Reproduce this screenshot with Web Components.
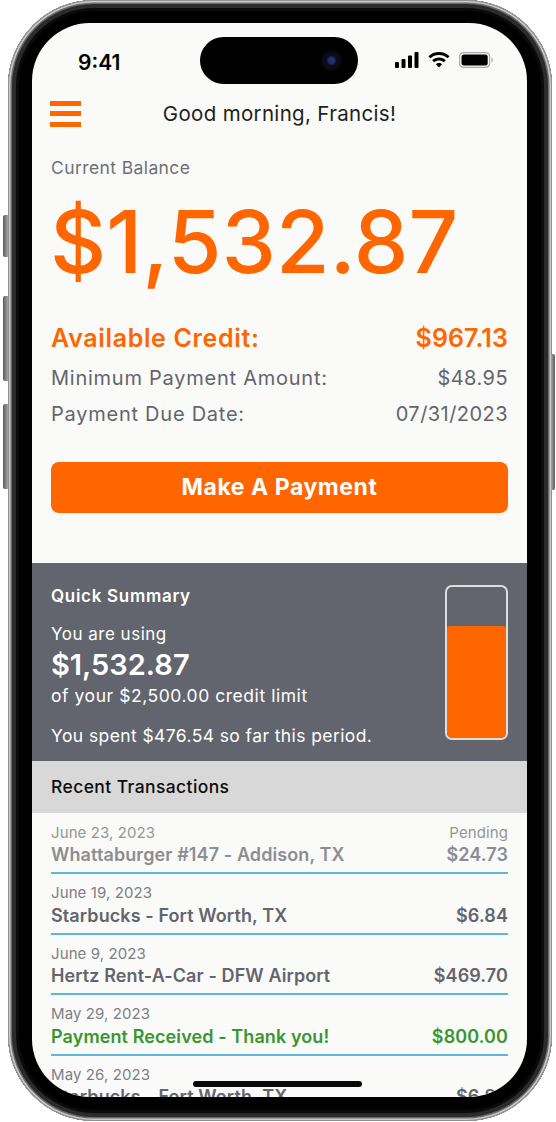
<!DOCTYPE html>
<html>
<head>
<meta charset="utf-8">
<title>Card balance</title>
<style>
html, body { margin: 0; background: #fff; }
body { font-family: Inter, "Liberation Sans", sans-serif; width: 556px; height: 1122px; overflow: hidden; }
</style>
</head>
<body>
<phone-frame>
  <status-bar></status-bar>
  <top-nav greeting="Good morning, Francis!"></top-nav>
  <balance-panel></balance-panel>
  <quick-summary></quick-summary>
  <section-head>Recent Transactions</section-head>
  <txn-row date="June 23, 2023" name="Whattaburger #147 - Addison, TX" amount="$24.73" note="Pending" kind="pending"></txn-row>
  <txn-row date="June 19, 2023" name="Starbucks - Fort Worth, TX" amount="$6.84"></txn-row>
  <txn-row date="June 9, 2023" name="Hertz Rent-A-Car - DFW Airport" amount="$469.70"></txn-row>
  <txn-row date="May 29, 2023" name="Payment Received - Thank you!" amount="$800.00" kind="credit"></txn-row>
  <txn-row date="May 26, 2023" name="Starbucks - Fort Worth, TX" amount="$6.84"></txn-row>
</phone-frame>

<script>
class PhoneFrame extends HTMLElement {
    constructor() {
        super();
        this.attachShadow({ mode: 'open' }).innerHTML = `
<style>
:host { display: block; position: relative; width: 544px; height: 1121px; margin-left: 8px; box-sizing: border-box;
    padding: 23px 24px; background: #000; border-radius: 86px;
    box-shadow: inset 0 0 0 1px #8f9190, inset 0 0 0 2.5px #c9cbca, inset 0 0 0 4px #6a6a6a, inset 0 0 0 8px #2b2b2b, inset 0 0 0 11px #0a0a0a; }
.screen { height: 1074px; width: 495px; background: #fafaf8; border-radius: 58px; overflow: hidden; position: relative; display: flex; flex-direction: column; }
.island { position: absolute; left: 168px; top: 14px; width: 158px; height: 47px; border-radius: 24px; background: #000; }
.lens { position: absolute; right: 16px; top: 13px; width: 21px; height: 21px; border-radius: 50%;
    background: radial-gradient(circle, #23306e 0 3px, #0b0d1c 5px, #07070c 10px); }
.home { position: absolute; left: 161px; bottom: 10px; width: 169px; height: 6px; border-radius: 3px; background: #07090b; }
.btn { position: absolute; left: -5px; width: 5px; background: linear-gradient(90deg, #5a5a5a, #a4a6a6); border-radius: 2px 0 0 2px; }
.btn.a { top: 215px; height: 42px; }
.btn.b { top: 296px; height: 85px; }
.btn.c { top: 404px; height: 85px; }
.btn.d { left: auto; right: -3px; top: 354px; height: 136px; border-radius: 0 2px 2px 0; width: 4px; background: linear-gradient(90deg, #a4a6a6, #5a5a5a); }
</style>
<span class="btn a"></span><span class="btn b"></span><span class="btn c"></span><span class="btn d"></span>
<div class="screen">
  <slot></slot>
  <div class="island"><div class="lens"></div></div>
  <div class="home"></div>
</div>`;
    }
}

class StatusBar extends HTMLElement {
    constructor() {
        super();
        this.attachShadow({ mode: 'open' }).innerHTML = `
<style>
:host { display: flex; flex: none; height: 65px; box-sizing: border-box; padding: 27px 34px 0 46px; justify-content: space-between; align-items: flex-start; }
.time { font: 600 21px/26px Inter, sans-serif; color: #000; }
.icons { display: flex; gap: 9px; align-items: center; margin-top: 2px; }
svg { display: block; }
</style>
<div class="time">9:41</div>
<div class="icons">
  <svg width="24" height="16" viewBox="0 0 24 16"><rect x="0" y="10" width="4" height="6" rx="1"/><rect x="6.5" y="7" width="4" height="9" rx="1"/><rect x="13" y="3.5" width="4" height="12.5" rx="1"/><rect x="19.5" y="0" width="4" height="16" rx="1"/></svg>
  <svg width="22" height="16" viewBox="0 0 22 16"><path d="M11 0C6.9 0 3.2 1.6.4 4.2l2 2.1C4.6 4.2 7.6 3 11 3s6.400 1.200 8.600 3.300l2-2.100C18.800 1.600 15.100 0 11 0z"/><path d="M11 5.500c-2.600 0-5 1-6.800 2.700l2 2.100C7.500 9 9.200 8.400 11 8.400s3.500.6 4.800 1.900l2-2.100C16 6.500 13.600 5.500 11 5.500z"/><path d="M11 11c-1.200 0-2.300.5-3.100 1.200L11 15.600l3.100-3.400C13.300 11.500 12.200 11 11 11z"/></svg>
  <svg width="34" height="16" viewBox="0 0 34 16"><rect x=".6" y=".6" width="30" height="14.800" rx="4" fill="none" stroke="#a8a8a8" stroke-width="1.200"/><rect x="2.500" y="2.500" width="26.200" height="11" rx="2.500"/><path d="M32.500 5.500c.9.300 1.300 1.300 1.300 2.500s-.4 2.200-1.300 2.500z" fill="#a8a8a8"/></svg>
</div>`;
    }
}

class TopNav extends HTMLElement {
    constructor() {
        super();
        this.attachShadow({ mode: 'open' }).innerHTML = `
<style>
:host { display: flex; flex: none; height: 51px; box-sizing: border-box; padding: 0 18px; align-items: center; }
.burger { width: 31px; display: flex; flex-direction: column; gap: 5.500px; }
.burger i { display: block; height: 5px; background: #ff6600; }
.title { flex: 1; text-align: center; font: 400 20.500px/26px Inter, sans-serif; letter-spacing: .33px; color: #1f1f1f; padding-right: 31px; }
</style>
<div class="burger"><i></i><i></i><i></i></div>
<div class="title"></div>`;
        this.shadowRoot.querySelector('.title').textContent = this.getAttribute('greeting');
    }
}

class BalancePanel extends HTMLElement {
    constructor() {
        super();
        this.attachShadow({ mode: 'open' }).innerHTML = `
<style>
:host { display: block; flex: none; height: 424px; box-sizing: border-box; padding: 0 19px; color: #63656d; }
.label { font: 400 17.500px/22px Inter, sans-serif; letter-spacing: .4px; color: #6d6f77; margin-top: 18px; }
.big { font: 500 87px/100px Inter, sans-serif; color: #ff6600; margin-top: 13px; margin-left: -1px; }
.row { display: flex; justify-content: space-between; font: 400 20px/26px Inter, sans-serif; letter-spacing: .75px; }
.row span + span { letter-spacing: .45px; }
.credit { font-weight: 600; font-size: 25px; line-height: 30px; letter-spacing: .65px; color: #ff6600; margin-top: 31px; }
.credit span + span { letter-spacing: .1px; }
.min { margin-top: 12px; }
.due { margin-top: 10px; }
button { display: block; width: 100%; height: 51px; margin-top: 35px; border: 0; border-radius: 8px; background: #ff6600; color: #fff; font: 700 23px/51px Inter, sans-serif; letter-spacing: .55px; padding: 0; }
</style>
<div class="label">Current Balance</div>
<div class="big">$1,532.87</div>
<div class="row credit"><span>Available Credit:</span><span>$967.13</span></div>
<div class="row min"><span>Minimum Payment Amount:</span><span>$48.95</span></div>
<div class="row due"><span>Payment Due Date:</span><span>07/31/2023</span></div>
<button>Make A Payment</button>`;
    }
}

class QuickSummary extends HTMLElement {
    constructor() {
        super();
        this.attachShadow({ mode: 'open' }).innerHTML = `
<style>
:host { display: flex; flex: none; height: 197.500px; box-sizing: border-box; padding: 22px 19px 0; background: #63656e; color: #fff; justify-content: space-between; }
.head { font: 600 17px/22px Inter, sans-serif; letter-spacing: .7px; }
.using { font: 400 17px/22px Inter, sans-serif; letter-spacing: .5px; margin-top: 16px; }
.amt { font: 600 29px/36px Inter, sans-serif; margin-top: 2px; }
.limit { font: 400 17.500px/22px Inter, sans-serif; letter-spacing: .55px; margin-top: 2px; }
.spent { font: 400 17.500px/22px Inter, sans-serif; letter-spacing: .4px; margin-top: 18px; }
.gauge { width: 63px; height: 154.500px; box-sizing: border-box; border: 2px solid #dcdee0; border-radius: 7px; display: flex; align-items: flex-end; overflow: hidden; }
.fill { width: 100%; height: 112px; background: #ff6600; border-radius: 3px 3px 4px 4px; }
</style>
<div>
  <div class="head">Quick Summary</div>
  <div class="using">You are using</div>
  <div class="amt">$1,532.87</div>
  <div class="limit">of your $2,500.00 credit limit</div>
  <div class="spent">You spent $476.54 so far this period.</div>
</div>
<div class="gauge"><div class="fill"></div></div>`;
    }
}

class SectionHead extends HTMLElement {
    constructor() {
        super();
        this.attachShadow({ mode: 'open' }).innerHTML = `
<style>
:host { display: flex; flex: none; height: 52px; box-sizing: border-box; padding: 0 19px; align-items: center; background: #d8d8d8; color: #0c0c0c; font: 500 17.500px/22px Inter, sans-serif; letter-spacing: .4px; margin-bottom: 10px; }
</style>
<slot></slot>`;
    }
}

class TxnRow extends HTMLElement {
    constructor() {
        super();
        this.attachShadow({ mode: 'open' }).innerHTML = `
<style>
:host { display: block; flex: none; margin: 0 19px; height: 60.500px; box-sizing: border-box; color: #63656d; }
.line { display: flex; justify-content: space-between; }
.small { font: 400 15px/19px Inter, sans-serif; letter-spacing: .1px; color: #7d7f86; }
.main { font: 600 18px/24px Inter, sans-serif; letter-spacing: .1px; border-bottom: 2px solid #5bb6e0; padding-bottom: 5px; margin-top: 1.500px; }
:host([kind=pending]) .small { color: #94969c; }
:host([kind=pending]) .main { color: #8b8d93; }
:host([kind=credit]) .main { color: #38962f; }
</style>
<div class="line small"><span class="date"></span><span class="note"></span></div>
<div class="line main"><span class="name"></span><span class="amount"></span></div>`;
        for (const key of ['date', 'note', 'name', 'amount']) {
            this.shadowRoot.querySelector('.' + key).textContent = this.getAttribute(key) || '';
        }
    }
}

customElements.define('phone-frame', PhoneFrame);
customElements.define('status-bar', StatusBar);
customElements.define('top-nav', TopNav);
customElements.define('balance-panel', BalancePanel);
customElements.define('quick-summary', QuickSummary);
customElements.define('section-head', SectionHead);
customElements.define('txn-row', TxnRow);
</script>
</body>
</html>
